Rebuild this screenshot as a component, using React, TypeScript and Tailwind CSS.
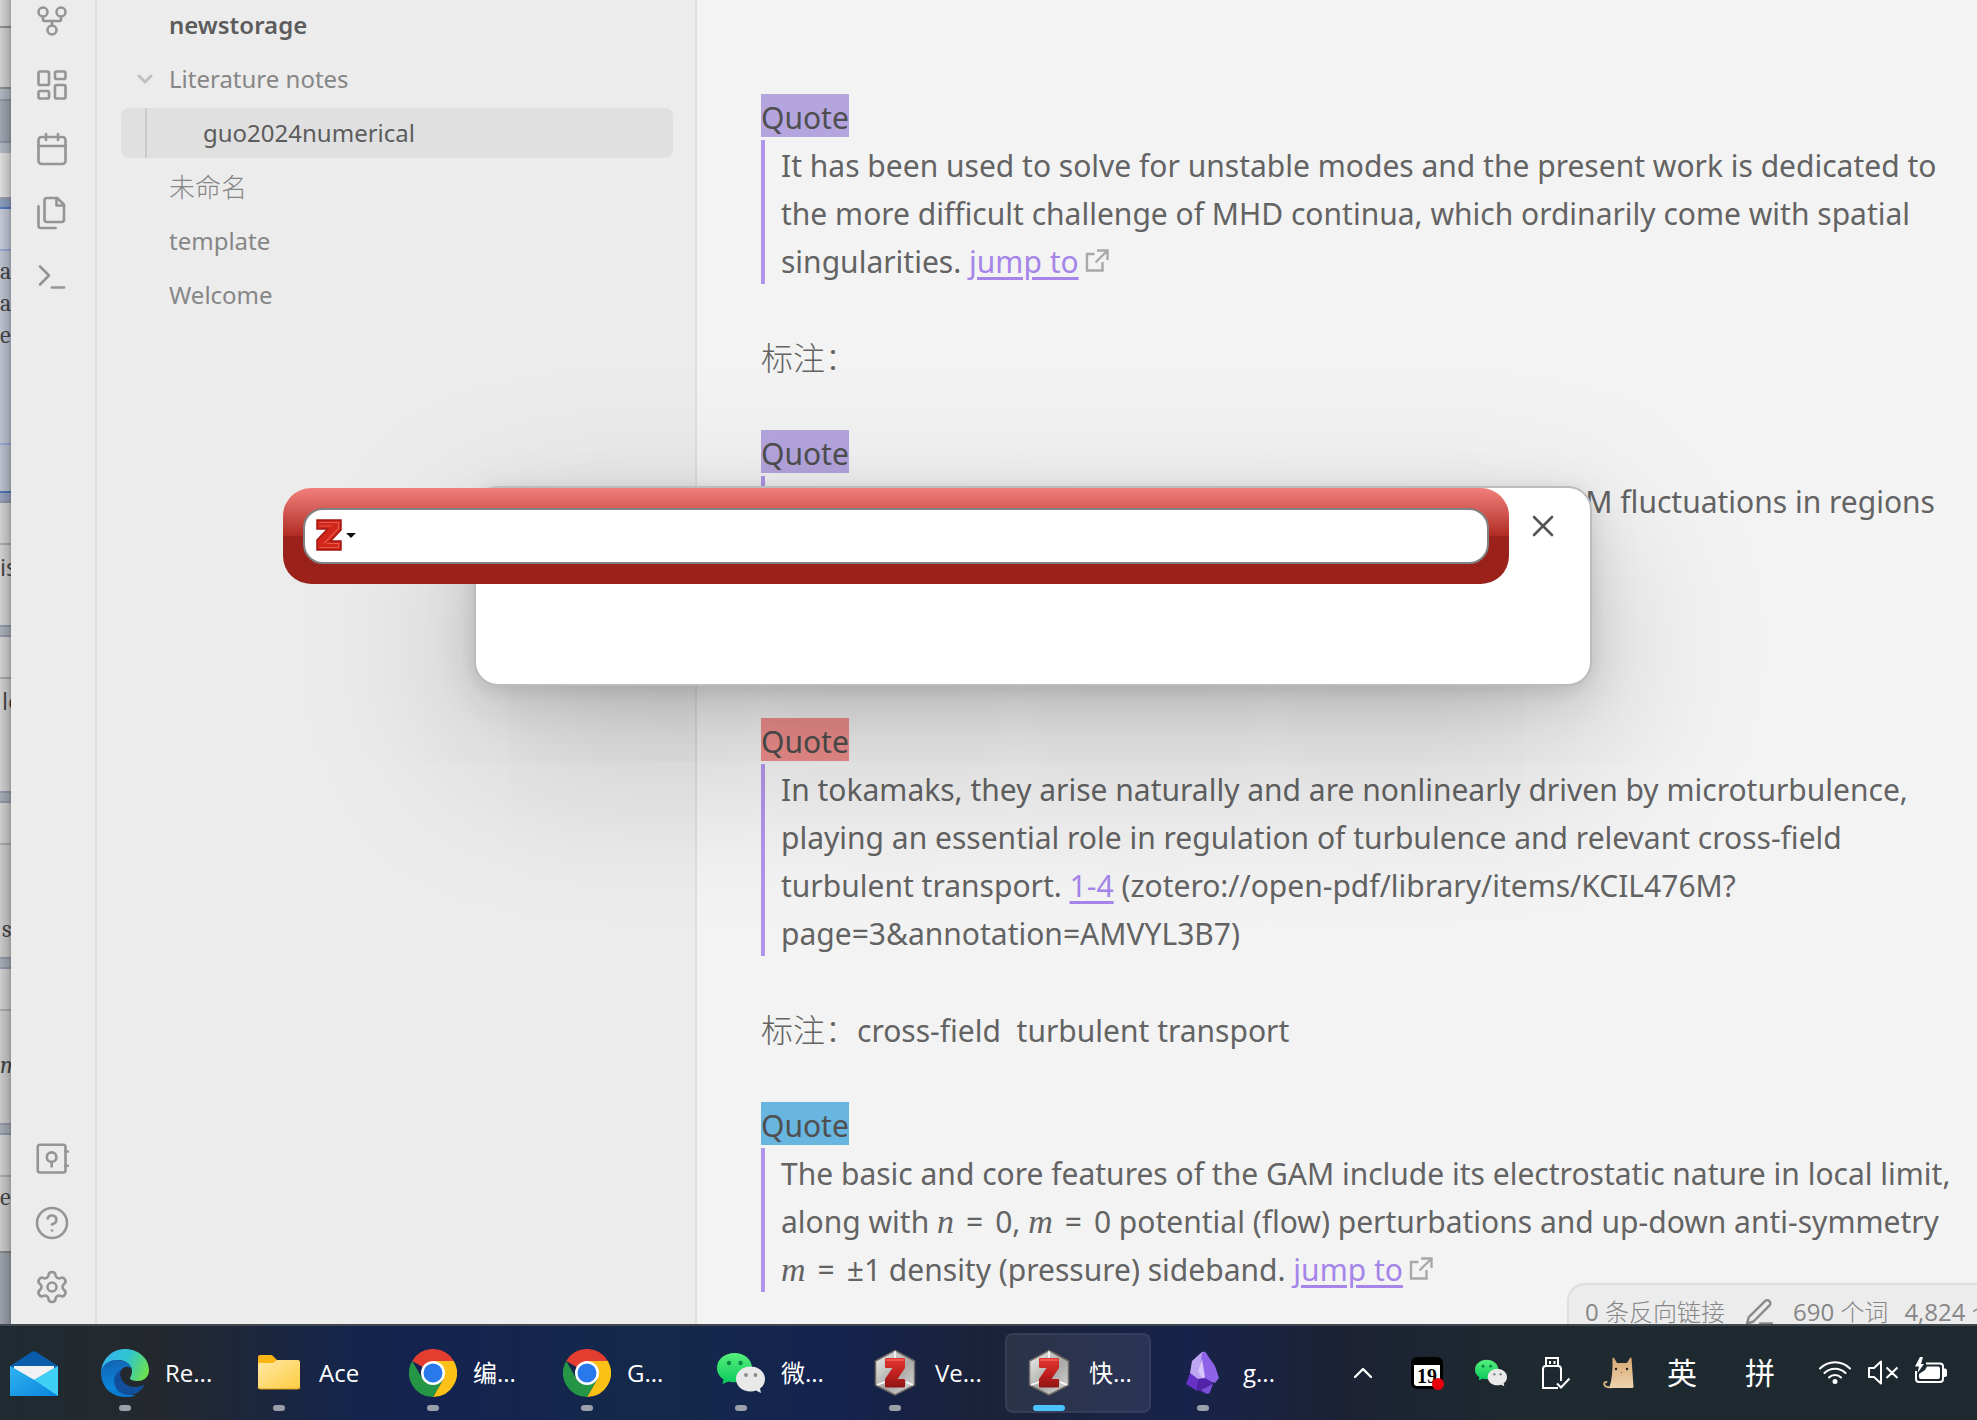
import React, { useState } from 'react';
import {
  Calendar,
  ChevronDown,
  ChevronUp,
  CircleHelp,
  GitFork,
  LayoutDashboard,
  Settings,
  Terminal,
  X,
} from 'lucide-react';

interface IconProps {
  className?: string;
  strokeWidth?: number;
}

const VaultIcon: React.FC<IconProps> = ({ className }) => (
  <svg className={className} viewBox="0 0 24 24" fill="none" stroke="currentColor" strokeWidth="1.75" strokeLinecap="round" strokeLinejoin="round">
    <rect x="2.5" y="2.5" width="18.500" height="18.500" rx="1.500" />
    <circle cx="11.750" cy="10.750" r="3.200" />
    <path d="M11.750 14v3M21 7h1.500M21 16.500h1.500" />
  </svg>
);

const PagesIcon: React.FC<IconProps> = ({ className }) => (
  <svg className={className} viewBox="0 0 24 24" fill="none" stroke="currentColor" strokeWidth="1.75" strokeLinecap="round" strokeLinejoin="round">
    <path d="M15.500 2H8.600C7.700 2 7 2.700 7 3.600v12.800c0 .9.700 1.600 1.600 1.600h9.800c.9 0 1.600-.7 1.600-1.600V6.500Z" />
    <path d="M3 7.600v12.800c0 .9.700 1.600 1.600 1.600h9.800M15 2v5h5" />
  </svg>
);

const ExternalIcon = () => (
  <svg className="ml-1.5 inline-block size-6 align-baseline text-[#a8a8a8]" viewBox="0 0 24 24" fill="none" stroke="currentColor" strokeWidth="2.400">
    <path d="M9.500 5H2v16.500h15.500V13M12 1.500h10.500V11M22.500 1.500L10.500 13.500" />
  </svg>
);

const PencilIcon = () => (
  <svg className="size-7 shrink-0 text-[#8a8a8a]" viewBox="0 0 28 28" fill="none" stroke="currentColor" strokeWidth="2.400" strokeLinecap="round" strokeLinejoin="round">
    <path d="M20 3.200a3 3 0 0 1 4.500 4.200L8.500 23.500 2 25.500l1.800-6.300ZM15 25.500h12" />
  </svg>
);

const MailIcon = () => (
  <svg className="h-[45px] w-12" viewBox="0 0 48 45">
    <defs>
      <linearGradient id="mailBody" x1="0" y1="0" x2="1" y2="1">
        <stop offset="0" stopColor="#2fb4f2" />
        <stop offset="1" stopColor="#0b84dc" />
      </linearGradient>
    </defs>
    <path d="M0 15 22 .8q2-1.200 4 0L48 15v3H0Z" fill="#0a5cab" />
    <path d="M4 15h40v12L24 34 4 27Z" fill="#f1f1f3" />
    <path d="M0 15 24 29 48 15v30H0Z" fill="url(#mailBody)" />
    <path d="M48 15v30L24 29Z" fill="#3fd0f6" />
    <path d="M0 15l24 14 24 16H0Z" fill="url(#mailBody)" />
  </svg>
);

const EdgeIcon = () => (
  <svg className="size-12" viewBox="0 0 48 48">
    <defs>
      <linearGradient id="edgeTop" x1="0" y1="0.300" x2="1" y2="0.600">
        <stop offset="0" stopColor="#35b4f0" />
        <stop offset="0.500" stopColor="#2fc4d0" />
        <stop offset="1" stopColor="#6be04f" />
      </linearGradient>
      <linearGradient id="edgeLow" x1="0.300" y1="0" x2="0.500" y2="1">
        <stop offset="0" stopColor="#1464b4" />
        <stop offset="0.700" stopColor="#0a84d8" />
        <stop offset="1" stopColor="#0a78cc" />
      </linearGradient>
    </defs>
    <path d="M0 23C1 10 11 0 24 0c14 0 24 10 24 21 0 7-5 11-11 11-5 0-8-1-8-3 0-1 2-3 2-7 0-6-6-11-14-11C8 11 2 16 0 23Z" fill="url(#edgeTop)" />
    <path d="M0 24c0-7 7-13 16-13 8 0 14 4 15 9-3-3-7-3-10 0-5 5-5 15 1 21 4 4 9 6 13 5-4 2-7 2-11 2C10 48 0 37 0 24Z" fill="url(#edgeLow)" />
    <path d="M20 21c-3 7 3 17 14 17 4 0 7-1 10-3-3 6-8 11-16 11-9 0-15-7-15-14 0-5 3-9 7-11Z" fill="#114f9c" />
  </svg>
);

const FolderIcon = () => (
  <svg className="h-12 w-12" viewBox="0 0 48 48">
    <defs>
      <linearGradient id="folder" x1="0" y1="0" x2="1" y2="1">
        <stop offset="0" stopColor="#ffe9a6" />
        <stop offset="1" stopColor="#ffcc42" />
      </linearGradient>
    </defs>
    <path d="M3 8q0-2 2-2h11q1.500 0 2.500 1.500L22 11h21v28H3Z" fill="#fbb616" />
    <path d="M3 14h15l4-3h21q2 0 2 2v25q0 2-2 2H5q-2 0-2-2Z" fill="url(#folder)" />
    <path d="M3 38q0 2 2 2h38q2 0 2-2" fill="none" stroke="#d99a1a" />
  </svg>
);

const ChromeIcon = () => (
  <svg className="size-12" viewBox="0 0 48 48">
    <path d="M24 24 3.200 12A24 24 0 0 1 44.800 12Z" fill="#e33e30" />
    <path d="M24 12h20.800A24 24 0 0 1 24 48l10.400-18Z" fill="#fbc116" />
    <path d="M13.600 30 3.200 12A24 24 0 0 0 24 48l10.400-18Z" fill="#259645" />
    <circle cx="24" cy="24" r="12" fill="#fff" />
    <circle cx="24" cy="24" r="9.500" fill="#2a79ec" />
  </svg>
);

const WeChatIcon: React.FC<IconProps> = ({ className }) => (
  <svg className={className} viewBox="0 0 48 48">
    <defs>
      <linearGradient id="wechat" x1="0" y1="0" x2="0" y2="1">
        <stop offset="0" stopColor="#57ef7c" />
        <stop offset="1" stopColor="#08c95c" />
      </linearGradient>
    </defs>
    <path d="M17.500 4C7.500 4 0 10.500 0 19c0 5 2.500 8.500 6.500 11.500L5.500 35l6-2.500C20 35 35 31 35 19 35 10.500 27.500 4 17.500 4Z" fill="url(#wechat)" />
    <circle cx="12" cy="14" r="2.200" fill="#0a8a42" />
    <circle cx="23.500" cy="14" r="2.200" fill="#0a8a42" />
    <path d="M33.500 17.500C25.500 17.500 19 23 19 30s6.500 12.500 14.500 12.500q3 0 5.500-1l5 2.500-1-4.500c3-2 5-5.500 5-9.500 0-7-6.500-12.500-14.500-12.500Z" fill="#e9e9ea" />
    <circle cx="29" cy="26" r="1.900" fill="#8a8a8a" />
    <circle cx="38.500" cy="26" r="1.900" fill="#8a8a8a" />
  </svg>
);

const ZoteroIcon = () => (
  <svg className="size-12" viewBox="0 0 48 48">
    <defs>
      <linearGradient id="hex" x1="0" y1="0" x2="1" y2="1">
        <stop offset="0" stopColor="#f2f2f0" />
        <stop offset="0.550" stopColor="#a9a9a8" />
        <stop offset="1" stopColor="#dcdad8" />
      </linearGradient>
      <linearGradient id="zred" x1="0" y1="0" x2="0" y2="1">
        <stop offset="0" stopColor="#e2382f" />
        <stop offset="0.550" stopColor="#bf1f1f" />
        <stop offset="1" stopColor="#8f1515" />
      </linearGradient>
    </defs>
    <path d="M24 1.500 43.500 12v24L24 46 4.500 36V12Z" fill="url(#hex)" stroke="#6f6a66" strokeWidth="1.500" />
    <path d="M24 2v8M6 36l8-3M42 36l-7-3" stroke="#fff" strokeWidth="1.500" />
    <path d="M14 10q0-1 1-1h18q1 0 1 1v9L26.500 30H33q1 0 1 1v6.500q0 1-1 1H15q-1 0-1-1V30l7.500-11H15q-1 0-1-1Z" fill="url(#zred)" />
    <path d="M15 11h18" stroke="#f0645a" strokeWidth="1.500" />
  </svg>
);

const ObsidianIcon = () => (
  <svg className="size-12" viewBox="0 0 48 48">
    <path d="M23 3 13 12l-2 12 6 9 12-2 4-12L27 4q-2-2-4-1Z" fill="#bfa6f2" />
    <path d="M27 4q-3-2-4 0l-2 14 5 13 10 3 4-5-4-12Z" fill="#8f63e8" />
    <path d="M11 24 7 35l11 7 1-12Z" fill="#6631c4" />
    <path d="M19 30q9-3 15 5l-3 8q-2 3-5 1l-8-3Z" fill="#5222a8" />
    <path d="M26 44q4 2 5-1l3-8-12 6Z" fill="#7b50d6" />
    <path d="M23 10l-4 12 4 7 3-1Z" fill="#d6c7fb" />
  </svg>
);

const UsbIcon = () => (
  <svg className="size-8" viewBox="0 0 32 32" fill="none" stroke="#fff" strokeWidth="2">
    <path d="M7 9V1h12v8M19 31H4V12q0-3 3-3h12q3 0 3 3v12M18 26.500l4 4 8.500-9" />
    <path d="M11 4v3M15.500 4v3" />
  </svg>
);

const CatIcon = () => (
  <svg className="size-8" viewBox="0 0 32 32">
    <defs>
      <linearGradient id="cat" x1="0" y1="0" x2="0" y2="1">
        <stop offset="0" stopColor="#d8a873" />
        <stop offset="1" stopColor="#ecd3ad" />
      </linearGradient>
    </defs>
    <path d="M9 30C4 31 1 29 1.200 27q.3-2.500 3-2" fill="none" stroke="#d9b27f" strokeWidth="2" />
    <path d="M9.500 1q.8-1 1.500 0l3 5h10l3-5q1-1 1.500 0l2 29q0 1-1.500 1H8q-2 0-1.500-1Q10 20 9.500 1Z" fill="url(#cat)" />
    <circle cx="13" cy="12" r="1.200" fill="#222" />
    <circle cx="24" cy="12" r="1.200" fill="#222" />
    <path d="M17.500 15h2l-1 1.500Z" fill="#a06a4a" />
  </svg>
);

const WifiIcon = () => (
  <svg className="size-8" viewBox="0 0 32 32" fill="none" stroke="#fff" strokeWidth="2" strokeLinecap="round">
    <path d="M1 11.500a21 21 0 0 1 30 0M5.500 16a14.800 14.800 0 0 1 21 0M10 20.500a8.500 8.500 0 0 1 12 0" />
    <circle cx="16" cy="24.500" r="2.500" fill="#fff" stroke="none" />
  </svg>
);

const MuteIcon = () => (
  <svg className="size-8" viewBox="0 0 32 32" fill="none" stroke="#fff" strokeWidth="2" strokeLinejoin="round">
    <path d="M2 11h5L14 4.500v22L7 20H2ZM19.500 10.500l11 10.500M30.500 10.500l-11 10.500" />
  </svg>
);

const BatteryIcon = () => (
  <svg className="size-8" viewBox="0 0 32 32">
    <path d="M11 6.500h14q3 0 3 3V22q0 3-3 3H4q-3 0-3-3v-8" fill="none" stroke="#fff" strokeWidth="2" />
    <path d="M12 9.500h11q2 0 2 2V20q0 2-2 2H6q-2 0-2-2v-3l6-4Z" fill="#fff" />
    <path d="M29 11.500h1q2 0 2 2V18q0 2-2 2h-1Z" fill="#fff" />
    <path d="M5 0 0 9.500h4L2.500 16l6.500-9H6L8 0Z" fill="#fff" />
  </svg>
);

const ribbonTop = [
  { label: 'Graph view', icon: GitFork },
  { label: 'Canvas', icon: LayoutDashboard },
  { label: 'Daily note', icon: Calendar },
  { label: 'Templates', icon: PagesIcon },
  { label: 'Command palette', icon: Terminal },
];

const ribbonBottom = [
  { label: 'Open vault', icon: VaultIcon },
  { label: 'Help', icon: CircleHelp },
  { label: 'Settings', icon: Settings },
];

// slices of the windows that peek out at the left edge
const slices = [
  { h: 'h-[26px]', look: 'bg-[#d4d4d4]', text: '' },
  { h: 'h-[63px]', look: 'border-t-2 border-b-2 border-[#8d8d8d] bg-[#cfcfcf]', text: '' },
  { h: 'h-[10px]', look: 'bg-[#b0b6c0]', text: '' },
  { h: 'h-[44px]', look: 'border-y-2 border-[#8a93a1] bg-[#9ea5b0]', text: '' },
  { h: 'h-[10px]', look: 'bg-[#b0b6c0]', text: '' },
  { h: 'h-[46px]', look: 'border-b-2 border-[#9aa0a8] bg-[#dcdcdc]', text: '' },
  { h: 'h-[10px]', look: 'border-b-2 border-[#5279bd] bg-[#8b9cbf]', text: '' },
  { h: 'h-[42px]', look: 'border-b-2 border-[#93a8d0] bg-[#c3c8d8]', text: '' },
  { h: 'h-[194px]', look: 'border-b-2 border-[#93a8d0] bg-[#bcc2d1] pt-1 font-serif', text: 'a\na\ne' },
  { h: 'h-[48px]', look: 'border-b-2 border-[#4a72b4] bg-[#b9bfce]', text: '' },
  { h: 'h-[10px]', look: 'border-b-2 border-[#8f98a6] bg-[#95a1bd]', text: '' },
  { h: 'h-[42px]', look: 'border-b-2 border-[#a8a8a8] bg-[#d0d0d0]', text: '' },
  { h: 'h-[80px]', look: 'bg-[#d0d0d0] pt-1.5', text: 'is' },
  { h: 'h-[12px]', look: 'border-y-2 border-[#8f98a6] bg-[#a9aeb9]', text: '' },
  { h: 'h-[42px]', look: 'border-b-2 border-[#a8a8a8] bg-[#d0d0d0]', text: '' },
  { h: 'h-[112px]', look: 'bg-[#cdcdcd] pt-1.5 pl-0.5', text: 'lo' },
  { h: 'h-[12px]', look: 'border-y-2 border-[#8f98a6] bg-[#a4a9b4]', text: '' },
  { h: 'h-[42px]', look: 'border-b-2 border-[#a8a8a8] bg-[#cdcdcd]', text: '' },
  { h: 'h-[112px]', look: 'bg-[#c9c9c9] pt-[68px] pl-0.5 font-serif', text: 's' },
  { h: 'h-[12px]', look: 'border-y-2 border-[#8f98a6] bg-[#a4a9b4]', text: '' },
  { h: 'h-[42px]', look: 'border-b-2 border-[#a8a8a8] bg-[#cdcdcd]', text: '' },
  { h: 'h-[112px]', look: 'bg-[#c9c9c9] pt-[38px] font-serif italic', text: 'm' },
  { h: 'h-[12px]', look: 'border-y-2 border-[#8f98a6] bg-[#a4a9b4]', text: '' },
  { h: 'h-[42px]', look: 'border-b-2 border-[#a8a8a8] bg-[#cdcdcd]', text: '' },
  { h: 'h-[76px]', look: 'border-b-2 border-[#858585] bg-[#c9c9c9] pt-1 font-serif', text: 'e' },
];

const files = ['未命名', 'template', 'Welcome'];

const tasks = [
  { name: 'Re...', icon: EdgeIcon },
  { name: 'Ace', icon: FolderIcon },
  { name: '编...', icon: ChromeIcon },
  { name: 'G...', icon: ChromeIcon },
  { name: '微...', icon: () => <WeChatIcon className="size-12" /> },
  { name: 'Ve...', icon: ZoteroIcon },
  { name: '快...', icon: ZoteroIcon, active: true },
  { name: 'g...', icon: ObsidianIcon },
];

const Ribbon = () => (
  <nav className="flex w-[86px] shrink-0 flex-col items-center justify-between border-r-2 border-[#dfdfdf] pt-[3px] pr-0.5 pb-[19px] text-[#959595]">
    <div className="flex flex-col gap-7">
      {ribbonTop.map(({ label, icon: Icon }) => (
        <button key={label} aria-label={label} className="block">
          <Icon className="size-9" strokeWidth={1.75} />
        </button>
      ))}
    </div>
    <div className="flex flex-col gap-7">
      {ribbonBottom.map(({ label, icon: Icon }) => (
        <button key={label} aria-label={label} className="block">
          <Icon className="size-9" strokeWidth={1.75} />
        </button>
      ))}
    </div>
  </nav>
);

const FilePane = () => (
  <aside className="flex w-[600px] shrink-0 flex-col gap-1 border-r-2 border-[#dfdfdf] pr-[22px] pl-6 font-['Noto_Sans','Noto_Sans_CJK_SC',sans-serif] text-2xl text-[#868686]">
    <div className="flex h-[50px] items-center pl-12 font-semibold text-[#5c5c5c]">newstorage</div>
    <button className="flex h-[50px] items-center gap-3 pl-3">
      <ChevronDown className="size-6 text-[#c0c0c0]" strokeWidth={3} />
      Literature notes
    </button>
    <button className="flex h-[50px] rounded-lg bg-[#e0e0e0] pl-6 text-[#5c5c5c]">
      <span className="flex h-full items-center border-l-2 border-[#cbcbcb] pl-14">guo2024numerical</span>
    </button>
    {files.map((file) => (
      <button key={file} className={`flex h-[50px] items-center pl-12 ${file === '未命名' ? 'text-[26px] font-light' : ''}`}>
        {file}
      </button>
    ))}
  </aside>
);

const Quote: React.FC<{ mark: string; children: React.ReactNode }> = ({ mark, children }) => (
  <>
    <div className="h-12 pt-0.5">
      <span className={`inline-flex h-[43px] items-center pt-1 align-top text-[#4f4f4f] ${mark}`}>Quote</span>
    </div>
    <blockquote className="border-l-4 border-[#b096ea] pl-4">{children}</blockquote>
  </>
);

const Line: React.FC<{ children?: React.ReactNode }> = ({ children }) => (
  <p className="h-12 pt-0.5 whitespace-pre">{children}</p>
);

const Note: React.FC<{ children?: React.ReactNode }> = ({ children }) => (
  <p className="my-12 h-12 pt-0.5 whitespace-pre">
    <span className="text-[32px] font-light">标注：</span>
    {children}
  </p>
);

const JumpLink: React.FC<{ text?: string }> = ({ text = 'jump to' }) => (
  <a href="#" className="text-[#a585ea] underline decoration-[3px] underline-offset-4">
    {text}
  </a>
);

const MathVar: React.FC<{ children: React.ReactNode }> = ({ children }) => (
  <i className="font-['Liberation_Serif',serif] text-[34px] leading-10">{children}</i>
);

const Equals = () => <span className="mx-3">=</span>;

const NoteView = () => (
  <main className="min-w-0 flex-1 overflow-hidden bg-[#f3f3f3] pt-[92px] pl-16 font-['Noto_Sans','Noto_Sans_CJK_SC',sans-serif] text-[30px] leading-[48px] text-[#636363]">
    <Quote mark="bg-[#b5a5df]">
      <Line>It has been used to solve for unstable modes and the present work is dedicated to</Line>
      <Line>the more difficult challenge of MHD continua, which ordinarily come with spatial</Line>
      <Line>singularities. <JumpLink /><ExternalIcon /></Line>
    </Quote>
    <Note />
    <Quote mark="bg-[#b5a5df]">
      <div className="pr-[42px] text-right">
        <Line>GAM fluctuations in regions</Line>
      </div>
      <Line />
    </Quote>
    <Note />
    <Quote mark="bg-[#f08f8d]">
      <Line>In tokamaks, they arise naturally and are nonlinearly driven by microturbulence,</Line>
      <Line>playing an essential role in regulation of turbulence and relevant cross-field</Line>
      <Line>turbulent transport. <JumpLink text="1-4" /> (zotero://open-pdf/library/items/KCIL476M?</Line>
      <Line>page=3&amp;annotation=AMVYL3B7)</Line>
    </Quote>
    <Note>cross-field{'  '}turbulent transport</Note>
    <Quote mark="bg-[#68b6e0]">
      <Line>The basic and core features of the GAM include its electrostatic nature in local limit,</Line>
      <Line>along with <MathVar>n</MathVar><Equals />0, <MathVar>m</MathVar><Equals />0 potential (flow) perturbations and up-down anti-symmetry</Line>
      <Line><MathVar>m</MathVar><Equals />±1 density (pressure) sideband. <JumpLink /><ExternalIcon /></Line>
    </Quote>
  </main>
);

const CitationBar = () => {
  const [query, setQuery] = useState('');

  return (
    <div className="absolute top-[488px] left-[283px] flex h-24 w-[1226px] rounded-[28px] bg-linear-to-b from-[#f27f7c] from-0% via-[#b02a23] via-50% to-[#9a221a] to-50% p-5">
      <div className="flex flex-1 items-center rounded-[20px] border-2 border-[#828282] bg-white pb-0.5 pl-[11px]">
        <button aria-label="Zotero menu" className="flex items-center gap-1">
          <svg className="h-8 w-[26px]" viewBox="0 0 26 32">
            <path d="M1 1h24v10L14.500 22H25v9H1V21l10.500-11H1Z" fill="#d3261a" stroke="#a31712" strokeWidth="1.500" />
            <path d="M3.500 3.500h19v6L8 24.500M3.500 28.500h19v-4H11M3.500 7h12" fill="none" stroke="#e4574b" strokeWidth="1.200" />
          </svg>
          <svg className="h-[5px] w-2.5" viewBox="0 0 10 5">
            <path d="M0 0h10L5 5Z" fill="#111" />
          </svg>
        </button>
        <input
          aria-label="Citation search"
          value={query}
          onChange={(e) => setQuery(e.target.value)}
          className="h-full min-w-0 flex-1 bg-transparent px-3 text-2xl outline-none"
        />
      </div>
    </div>
  );
};

const Taskbar = () => (
  <footer className="relative flex h-24 shrink-0 items-center justify-between border-t-2 border-[#40474f] bg-[linear-gradient(90deg,#1f2b31_0%,#24282e_8%,#14254c_18%,#14234f_22%,#14294a_33%,#14234f_42%,#1b2238_50%,#17234a_60%,#1c2234_68%,#1f2930_76%,#1e292f_100%)] pr-[30px] text-white">
    <div className="flex items-center">
      <button aria-label="Mail" className="mr-[23px] pl-2.5">
        <MailIcon />
      </button>
      <div className="flex gap-2">
        {tasks.map(({ name, icon: Icon, active }, idx) => (
          <button
            key={idx}
            className={`relative flex h-20 w-[146px] items-center gap-4 rounded-lg border-2 pl-[18px] text-2xl ${
              active ? 'border-white/5 bg-white/8' : 'border-transparent'
            }`}
          >
            <Icon />
            {name}
            <span
              className={`absolute bottom-0 h-1.5 rounded-full ${
                active ? 'left-[26px] w-8 bg-[#4cc2ff]' : 'left-9 w-3 bg-[#9a9faa]'
              }`}
            />
          </button>
        ))}
      </div>
    </div>
    <div className="flex items-center gap-8">
      <ChevronUp className="size-8" strokeWidth={1.75} />
      <span className="relative flex size-8 items-center justify-center rounded-md border-3 border-t-8 border-black bg-white font-['Liberation_Serif',serif] text-xl leading-5 font-bold text-black">
        19
        <span className="absolute -right-1 -bottom-1 size-3 rounded-full bg-red-600" />
      </span>
      <WeChatIcon className="size-8" />
      <UsbIcon />
      <CatIcon />
      <span className="text-3xl">英</span>
      <span className="ml-4 text-3xl">拼</span>
      <span className="ml-3 flex gap-4">
        <WifiIcon />
        <MuteIcon />
        <BatteryIcon />
      </span>
    </div>
  </footer>
);

export default function App() {
  return (
    <div className="flex h-screen flex-col overflow-hidden bg-[#ececec] font-['Open_Sans','Noto_Sans_CJK_SC',sans-serif]">
      <div className="relative flex min-h-0 flex-1 overflow-hidden">
        <div className="relative w-[11px] shrink-0 overflow-hidden bg-[#9ba0ab] text-2xl leading-8 text-[#444]">
          {slices.map((slice, idx) => (
            <div key={idx} className={`overflow-hidden whitespace-pre ${slice.h} ${slice.look}`}>
              {slice.text}
            </div>
          ))}
          <div className="absolute inset-0 border-r-2 border-black/20 bg-linear-to-r from-transparent to-black/15" />
        </div>
        <Ribbon />
        <FilePane />
        <NoteView />

        <div className="absolute -right-20 -bottom-3 flex h-[53px] w-[490px] items-center rounded-tl-[18px] border-2 border-[#dedede] bg-[#ececec] pt-1 pl-4 text-2xl whitespace-nowrap text-[#868686]">
          <span className="mr-5">0 <span className="font-light">条反向链接</span></span>
          <PencilIcon />
          <span className="ml-5">690 <span className="font-light">个词</span></span>
          <span className="ml-4">4,824 <span className="font-light">个字符</span></span>
        </div>

        <div
          role="dialog"
          aria-label="Citation"
          className="absolute top-[486px] left-[474px] h-[200px] w-[1118px] rounded-3xl border-2 border-[#bcbcbc] bg-white shadow-[0_4px_15px_rgba(0,0,0,0.08),0_13px_49px_rgba(0,0,0,0.13),0_60px_180px_rgba(0,0,0,0.22)]"
        >
          <button aria-label="Close" className="absolute top-5 right-[29px] text-[#555]">
            <X className="size-9" strokeWidth={1.75} />
          </button>
        </div>
        <CitationBar />
      </div>
      <Taskbar />
    </div>
  );
}
